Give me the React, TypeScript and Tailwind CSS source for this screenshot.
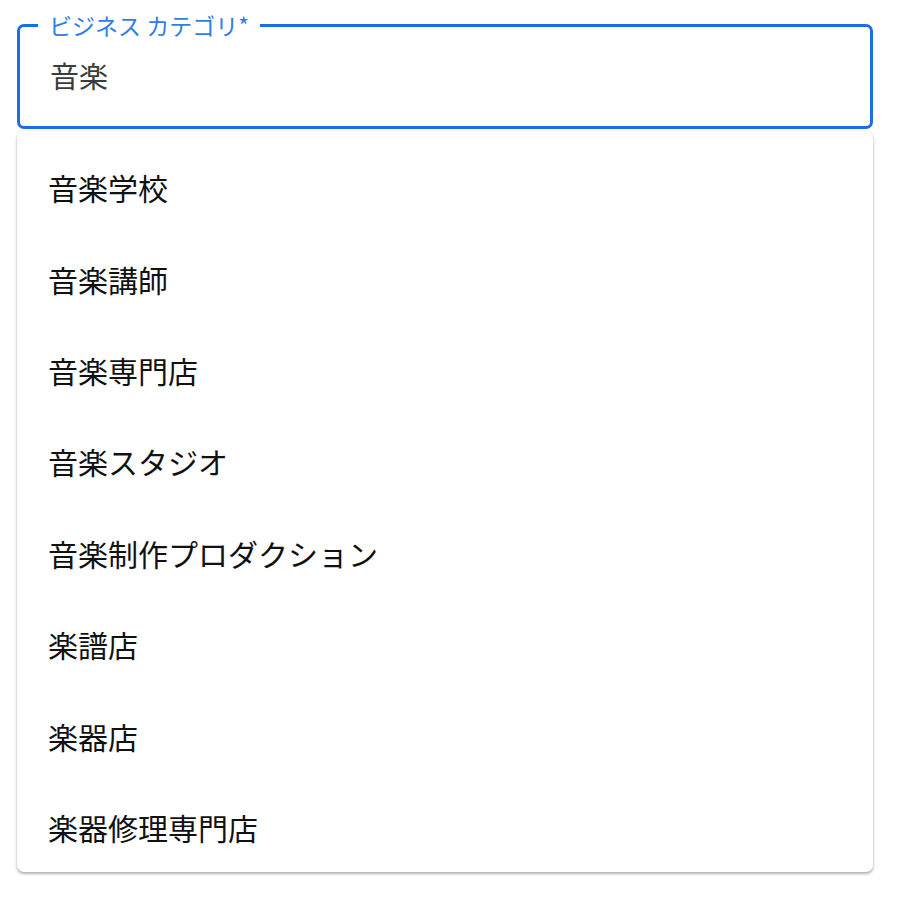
import React from 'react'

const options = [
  '音楽学校',
  '音楽講師',
  '音楽専門店',
  '音楽スタジオ',
  '音楽制作プロダクション',
  '楽譜店',
  '楽器店',
  '楽器修理専門店',
]

const font = { fontFamily: '"Noto Sans CJK JP", "Noto Sans", sans-serif' }

const App = () => {
  return (
    <div className="min-h-[899px] bg-white px-[17px]" style={font}>
      <fieldset className="mt-[12px] h-[117px] w-[856px] rounded-[7px] border-[3px] border-[#1a6fe6] p-0">
        <legend className="ml-[18px] px-[11px] text-[23px] leading-[26px] text-[#2f7de6]">
          ビジネス カテゴリ*
        </legend>
        <div className="pl-[30px] pt-[22px] text-[29px] leading-[30px] text-[#3c3c3c]">音楽</div>
      </fieldset>
      <ul className="mt-[2px] h-[741px] w-[856px] overflow-hidden rounded-[7px] bg-white pt-[11px] shadow-[0_2px_3px_rgba(0,0,0,0.3),0_0_2px_rgba(0,0,0,0.12)]">
        {options.map((o) => (
          <li key={o} className="flex h-[91.43px] items-center pl-[31px] text-[30px] text-[#111]">
            {o}
          </li>
        ))}
      </ul>
    </div>
  )
}

export default App
